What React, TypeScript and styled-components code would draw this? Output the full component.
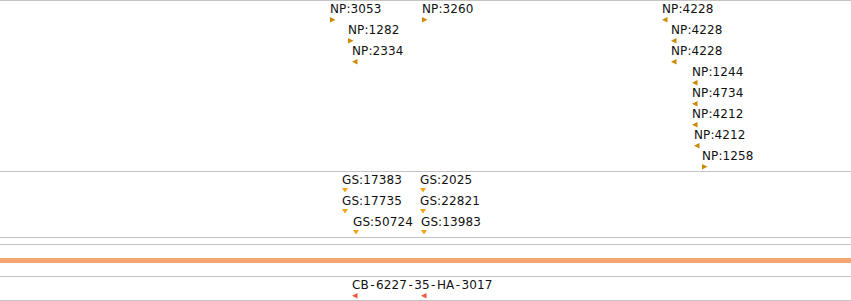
import React from 'react';
import styled, { createGlobalStyle } from 'styled-components';

const GlobalStyle = createGlobalStyle`
  html, body {
    margin: 0;
    padding: 0;
    background: #fff;
  }
  body {
    font-family: "DejaVu Sans", Verdana, sans-serif;
    color: #111;
  }
`;

type Strand = 'fwd' | 'rev' | 'none';

interface Feature {
  label?: string;
  x: number;
  row: number;
  strand: Strand;
}

interface TrackData {
  id: string;
  height: number;
  color: string;
  features: Feature[];
}

const ROW_PITCH = 21;

const tracks: TrackData[] = [
  {
    id: 'np',
    height: 170,
    color: '#cc8a00',
    features: [
      { label: 'NP:3053', x: 330, row: 0, strand: 'fwd' },
      { label: 'NP:3260', x: 422, row: 0, strand: 'fwd' },
      { label: 'NP:1282', x: 348, row: 1, strand: 'fwd' },
      { label: 'NP:2334', x: 352, row: 2, strand: 'rev' },
      { label: 'NP:4228', x: 662, row: 0, strand: 'rev' },
      { label: 'NP:4228', x: 671, row: 1, strand: 'rev' },
      { label: 'NP:4228', x: 671, row: 2, strand: 'rev' },
      { label: 'NP:1244', x: 692, row: 3, strand: 'rev' },
      { label: 'NP:4734', x: 692, row: 4, strand: 'rev' },
      { label: 'NP:4212', x: 692, row: 5, strand: 'rev' },
      { label: 'NP:4212', x: 694, row: 6, strand: 'rev' },
      { label: 'NP:1258', x: 702, row: 7, strand: 'fwd' },
    ],
  },
  {
    id: 'gs',
    height: 65,
    color: '#f2a31b',
    features: [
      { label: 'GS:17383', x: 342, row: 0, strand: 'none' },
      { label: 'GS:2025', x: 420, row: 0, strand: 'none' },
      { label: 'GS:17735', x: 342, row: 1, strand: 'none' },
      { label: 'GS:22821', x: 420, row: 1, strand: 'none' },
      { label: 'GS:50724', x: 353, row: 2, strand: 'none' },
      { label: 'GS:13983', x: 421, row: 2, strand: 'none' },
    ],
  },
  { id: 'empty', height: 6, color: '#999', features: [] },
];

const cbTrack: TrackData = {
  id: 'cb',
  height: 23,
  color: '#ef5a3a',
  features: [
    { label: 'CB-6227-35-HA-3017', x: 352, row: 0, strand: 'rev' },
    { x: 421, row: 0, strand: 'rev' },
  ],
};

const Page = styled.div`
  width: 851px;
  display: flex;
  flex-direction: column;
  border-top: 1px solid #c4c4c4;
`;

const Track = styled.div<{ $height: number }>`
  position: relative;
  height: ${p => p.$height}px;
  border-bottom: 1px solid #c4c4c4;
  overflow: hidden;
`;

const BandTrack = styled.div`
  height: 31px;
  display: flex;
  align-items: center;
  border-bottom: 1px solid #c4c4c4;
`;

const Band = styled.div`
  flex: 1;
  height: 5px;
  background: #f5a572;
`;

const FeatureBox = styled.div`
  position: absolute;
  display: flex;
  flex-direction: column;
  align-items: flex-start;
  gap: 1px;
`;

const Label = styled.span`
  font-size: 12px;
  line-height: 14px;
  height: 14px;
  white-space: nowrap;
  letter-spacing: 0.1px;
  color: #111;
`;

// hyphens in clone names are drawn wider in the viewer
const Dash = styled.span`
  padding: 0 1.4px;
`;

const Spacer = styled.span`
  height: 14px;
`;

const MarkerSvg = styled.svg`
  display: block;
`;

const Marker: React.FC<{ strand: Strand; color: string }> = ({ strand, color }) => {
  if (strand === 'none') {
    return (
      <MarkerSvg width={6} height={5} viewBox="0 0 6 5">
        <polygon points="0,0 6,0 3,4.5" fill={color} />
      </MarkerSvg>
    );
  }
  const pts = strand === 'fwd' ? '0,0 5.5,2.75 0,5.5' : '5.5,0 0,2.75 5.5,5.5';
  return (
    <MarkerSvg width={6} height={6} viewBox="0 0 6 6">
      <polygon points={pts} fill={color} />
    </MarkerSvg>
  );
};

const renderLabel = (text: string) =>
  text.split('-').map((part, i) => (
    <React.Fragment key={i}>
      {i > 0 && <Dash>-</Dash>}
      {part}
    </React.Fragment>
  ));

const TrackView: React.FC<{ track: TrackData }> = ({ track }) => (
  <Track $height={track.height}>
    {track.features.map((f, i) => (
      <FeatureBox key={i} style={{ left: f.x, top: f.row * ROW_PITCH + 1 }}>
        {f.label ? <Label>{renderLabel(f.label)}</Label> : <Spacer />}
        <Marker strand={f.strand} color={track.color} />
      </FeatureBox>
    ))}
  </Track>
);

const App: React.FC = () => (
  <>
    <GlobalStyle />
    <Page>
      {tracks.map(t => (
        <TrackView key={t.id} track={t} />
      ))}
      <BandTrack>
        <Band />
      </BandTrack>
      <TrackView track={cbTrack} />
    </Page>
  </>
);

export default App;
